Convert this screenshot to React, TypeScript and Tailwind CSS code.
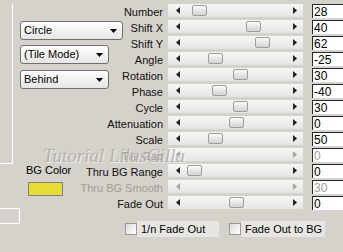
import React from "react";

interface Row {
  label: string;
  value: string;
  thumb?: number;
  disabled?: boolean;
}

const rows: Row[] = [
  { label: "Number", value: "28", thumb: 24 },
  { label: "Shift X", value: "40", thumb: 78 },
  { label: "Shift Y", value: "62", thumb: 87 },
  { label: "Angle", value: "-25", thumb: 40 },
  { label: "Rotation", value: "30", thumb: 65 },
  { label: "Phase", value: "-40", thumb: 44 },
  { label: "Cycle", value: "30", thumb: 65 },
  { label: "Attenuation", value: "0", thumb: 61 },
  { label: "Scale", value: "50", thumb: 40 },
  { label: "Tile Gap", value: "0", disabled: true },
  { label: "Thru BG Range", value: "0", thumb: 19 },
  { label: "Thru BG Smooth", value: "30", disabled: true },
  { label: "Fade Out", value: "0", thumb: 61 },
];

const Select = ({ text, wide }: { text: string; wide?: boolean }) => {
  return (
    <div
      className={`flex items-center justify-between h-[19px] ${wide ? "w-[103px]" : "w-[89px]"} rounded-[3px] border border-[#707070] bg-gradient-to-b from-[#ffffff] to-[#e6e6e4] pl-[3px] pr-[5px] text-[11px] text-black`}
    >
      <span>{text}</span>
      <svg width="7" height="4" viewBox="0 0 7 4">
        <polygon points="0,0 7,0 3.5,4" fill="#000" />
      </svg>
    </div>
  );
};

const SliderRow = ({ row }: { row: Row }) => {
  const arrow = row.disabled ? "#a8a6a2" : "#222";
  return (
    <div className="flex items-start h-[16px]">
      <div className="flex justify-end w-[38px] h-[16px] shrink-0">
        <span
          className={`whitespace-nowrap shrink-0 leading-[16px] text-[11px] ${row.disabled ? "text-[#a09c96]" : "text-[#111]"}`}
        >
          {row.label}
        </span>
      </div>
      <div className="relative flex items-center justify-between ml-[5px] w-[135px] h-[13px] shrink-0 bg-gradient-to-b from-[#f6f6f5] to-[#e4e4e2] pl-[8px] pr-[6px]">
        <svg width="4" height="7" viewBox="0 0 4 7">
          <polygon points="4,0 0,3.5 4,7" fill={arrow} />
        </svg>
        <svg width="4" height="7" viewBox="0 0 4 7">
          <polygon points="0,0 4,3.5 0,7" fill={arrow} />
        </svg>
        {row.thumb !== undefined && (
          <div
            className="absolute top-[1px] w-[15px] h-[11px] rounded-[2px] border border-[#9c9c9a] bg-gradient-to-b from-[#fbfbfb] to-[#d2d2d0]"
            style={{ left: row.thumb }}
          />
        )}
      </div>
      <div
        className={`ml-[9px] w-[31px] h-[14px] shrink-0 border-t border-l border-[#2a2a2a] bg-white pl-[1px] text-[12px] leading-[14px] ${row.disabled ? "text-[#a09c96]" : "text-black"}`}
      >
        {row.value}
      </div>
    </div>
  );
};

const CheckOption = ({ label, width }: { label: string; width: string }) => {
  return (
    <div className="flex items-center">
      <div className="w-[12px] h-[12px] border border-[#9a9a98] bg-gradient-to-br from-[#dcdcda] to-[#ffffff]" />
      <div className={`flex items-center h-[16px] ${width} bg-[#e8e6e2] pl-[4px] text-[11px] text-black`}>
        {label}
      </div>
    </div>
  );
};

export default function App() {
  return (
    <div className="relative flex w-[343px] h-[252px] overflow-hidden bg-[#d5d2cc] font-['Liberation_Sans',Arial,sans-serif]">
      {/* left frame edge */}
      <div className="flex flex-col w-[20px] shrink-0">
        <div className="mt-[4px] w-[13px] h-[160px] border-r border-b border-white" />
        <div className="mt-[44px] w-[20px] h-[16px] border-t border-r border-b border-white" />
      </div>

      {/* presets and colour */}
      <div className="flex flex-col w-[105px] shrink-0">
        <div className="mt-[21px]">
          <Select text="Circle" wide />
        </div>
        <div className="mt-[5px]">
          <Select text="(Tile Mode)" />
        </div>
        <div className="mt-[6px]">
          <Select text="Behind" />
        </div>
        <div className="mt-[73px] ml-[6px] text-[11px] leading-[16px] text-black">BG Color</div>
        <div className="mt-[4px] ml-[8px] w-[35px] h-[14px] border border-[#808080] bg-[#e6dc34]" />
      </div>

      {/* sliders */}
      <div className="flex flex-col w-[218px] shrink-0 pt-[4px]">
        {rows.map((row) => (
          <SliderRow key={row.label} row={row} />
        ))}
        <div className="flex items-center gap-[10px] mt-[9px]">
          <CheckOption label="1/n Fade Out" width="w-[82px]" />
          <CheckOption label="Fade Out to BG" width="w-[84px]" />
        </div>
      </div>

      {/* watermark */}
      <div className="absolute left-[43px] top-[147px] font-['Liberation_Serif',serif] italic text-[19px] leading-[17px] text-[#aeaaa4] opacity-80 [text-shadow:1px_1px_0_rgba(255,255,255,0.8)] pointer-events-none whitespace-nowrap">
        Tutorial LilasCilla
      </div>
    </div>
  );
}
